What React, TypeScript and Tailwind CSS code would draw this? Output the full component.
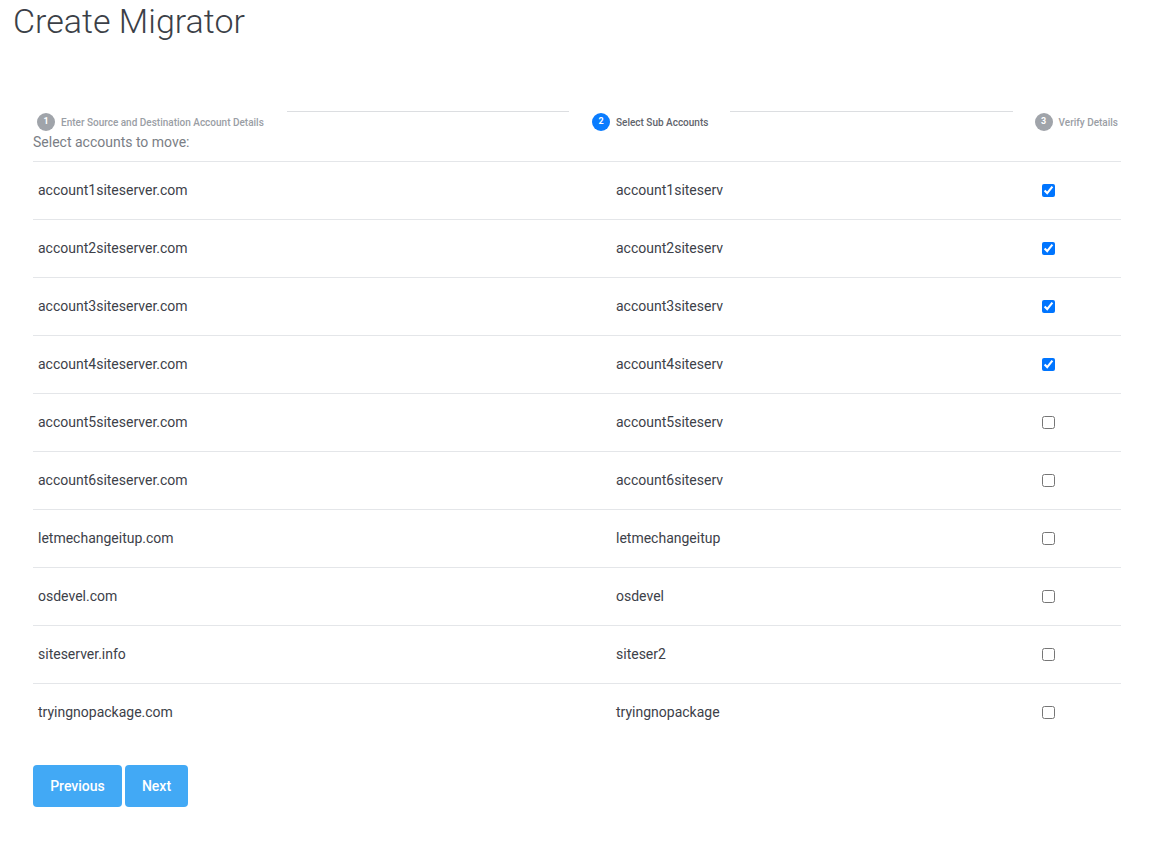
import React from 'react';

const ACCOUNTS: { domain: string; user: string; checked: boolean }[] = [
  { domain: 'account1siteserver.com', user: 'account1siteserv', checked: true },
  { domain: 'account2siteserver.com', user: 'account2siteserv', checked: true },
  { domain: 'account3siteserver.com', user: 'account3siteserv', checked: true },
  { domain: 'account4siteserver.com', user: 'account4siteserv', checked: true },
  { domain: 'account5siteserver.com', user: 'account5siteserv', checked: false },
  { domain: 'account6siteserver.com', user: 'account6siteserv', checked: false },
  { domain: 'letmechangeitup.com', user: 'letmechangeitup', checked: false },
  { domain: 'osdevel.com', user: 'osdevel', checked: false },
  { domain: 'siteserver.info', user: 'siteser2', checked: false },
  { domain: 'tryingnopackage.com', user: 'tryingnopackage', checked: false },
];

function Step({ n, label, active }: { n: number; label: string; active?: boolean }) {
  return (
    <div className="flex items-center gap-[6px] pt-[2px] shrink-0">
      <span
        className={
          'w-[18px] h-[18px] rounded-full flex items-center justify-center text-[9px] font-bold text-white ' +
          (active ? 'bg-[#0a7cff]' : 'bg-[#a0a4aa]')
        }
      >
        {n}
      </span>
      <span className={'text-[10px] font-medium ' + (active ? 'text-[#5f646c]' : 'text-[#9a9ea5]')}>
        {label}
      </span>
    </div>
  );
}

export default function App() {
  return (
    <div className="min-h-[841px] bg-white font-['Roboto',sans-serif] text-[#3d4149]">
      <h1 className="pl-[13px] pt-[2px] text-[34px] leading-[38px] font-light text-[#3b3f47]">
        Create Migrator
      </h1>

      <div className="mx-[33px] w-[1088px]">
        {/* ── Stepper ───────────────────── */}
        <div className="flex items-start mt-[71px] pl-[4px] pr-[3px]">
          <Step n={1} label="Enter Source and Destination Account Details" />
          <div className="flex-1 h-px bg-[#dcdee1] mx-[23px]" />
          <Step n={2} label="Select Sub Accounts" active />
          <div className="flex-1 h-px bg-[#dcdee1] mx-[22px]" />
          <Step n={3} label="Verify Details" />
        </div>

        <p className="text-[14px] leading-[16px] text-[#7a7e85] mt-[3px] mb-[11px]">Select accounts to move:</p>

        {/* ── Accounts ─────────────────── */}
        <div>
          {ACCOUNTS.map((a) => (
            <div
              key={a.domain}
              className="grid grid-cols-[583px_1fr_auto] items-center h-[58px] border-t border-[#e4e6e9] text-[14px]"
            >
              <span className="pl-[5px]">{a.domain}</span>
              <span>{a.user}</span>
              <span className="pr-[66px] flex items-center">
                <input type="checkbox" defaultChecked={a.checked} className="w-[13px] h-[13px] m-0" />
              </span>
            </div>
          ))}
        </div>

        <div className="flex gap-[3px] mt-[24px]">
          <button className="h-[42px] w-[89px] rounded-[4px] bg-[#42a9f5] text-white text-[14px] font-medium">
            Previous
          </button>
          <button className="h-[42px] w-[63px] rounded-[4px] bg-[#42a9f5] text-white text-[14px] font-medium">
            Next
          </button>
        </div>
      </div>
    </div>
  );
}
